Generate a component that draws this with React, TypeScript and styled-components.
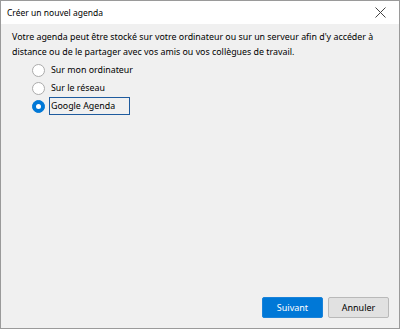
import React, { useState } from "react";
import styled, { createGlobalStyle } from "styled-components";

const GlobalStyle = createGlobalStyle`
  html, body {
    margin: 0;
    padding: 0;
    background: #f0f0f0;
  }
  body {
    font-family: "Segoe UI", "Noto Sans", "Liberation Sans", sans-serif;
  }
`;

const OPTIONS = ["Sur mon ordinateur", "Sur le réseau", "Google Agenda"];

const App = () => {
  const [selected, setSelected] = useState(2);

  return (
    <StyledWindow>
      <GlobalStyle />
      <TitleBar>
        <Title>Créer un nouvel agenda</Title>
        <CloseButton aria-label="Fermer">
          <svg width="11" height="11" viewBox="0 0 11 11">
            <path d="M0.5 0.5 L10.5 10.5 M10.5 0.5 L0.5 10.5" stroke="#444" strokeWidth="1" />
          </svg>
        </CloseButton>
      </TitleBar>

      <Body>
        <Intro>
          Votre agenda peut être stocké sur votre ordinateur ou sur un serveur afin d'y accéder à
          <br />
          distance ou de le partager avec vos amis ou vos collègues de travail.
        </Intro>

        <OptionList>
          {OPTIONS.map((label, i) => (
            <OptionRow key={label} onClick={() => setSelected(i)}>
              <Radio $checked={selected === i} />
              <OptionLabel $focused={selected === i}>{label}</OptionLabel>
            </OptionRow>
          ))}
        </OptionList>
      </Body>

      <Footer>
        <Button $primary>Suivant</Button>
        <Button>Annuler</Button>
      </Footer>
    </StyledWindow>
  );
};

export default App;

const StyledWindow = styled.div`
  display: flex;
  flex-direction: column;
  box-sizing: border-box;
  width: 400px;
  height: 329px;
  border: 1px solid #9a9a9a;
  background: #f0f0f0;
  color: #000;
  font-size: 8.85px;
`;

const TitleBar = styled.div`
  display: flex;
  align-items: center;
  justify-content: space-between;
  height: 23px;
  padding-left: 6px;
  background: #fff;
`;

const Title = styled.span`
  font-size: 8.5px;
  color: #000;
`;

const CloseButton = styled.div`
  display: flex;
  align-items: center;
  justify-content: center;
  width: 26px;
  height: 23px;
  margin-right: 6px;
`;

const Body = styled.div`
  display: flex;
  flex-direction: column;
  flex: 1;
  padding: 6px 11px 0 11px;
`;

const Intro = styled.p`
  margin: 0;
  line-height: 15px;
  white-space: nowrap;
`;

const OptionList = styled.div`
  display: flex;
  flex-direction: column;
  margin-top: 1px;
  padding-left: 20px;
`;

const OptionRow = styled.label`
  display: flex;
  align-items: center;
  gap: 4px;
  height: 18px;
`;

const Radio = styled.span<{ $checked?: boolean }>`
  position: relative;
  box-sizing: border-box;
  width: 13px;
  height: 13px;
  border-radius: 50%;
  background: ${(p) => (p.$checked ? "#0078d7" : "#fff")};
  border: 1px solid ${(p) => (p.$checked ? "#0078d7" : "#ababab")};

  &::after {
    content: "";
    display: ${(p) => (p.$checked ? "block" : "none")};
    position: absolute;
    left: 50%;
    top: 50%;
    width: 5px;
    height: 5px;
    margin: -2.5px 0 0 -2.5px;
    border-radius: 50%;
    background: #fff;
  }
`;

const OptionLabel = styled.span<{ $focused?: boolean }>`
  display: inline-block;
  box-sizing: border-box;
  height: 18px;
  padding: 0 ${(p) => (p.$focused ? "14px" : "1px")} 0 1px;
  line-height: 16px;
  border: 1px solid ${(p) => (p.$focused ? "#1e5b9e" : "transparent")};
`;

const Footer = styled.div`
  display: flex;
  justify-content: flex-end;
  gap: 5px;
  padding: 0 10px 10px 0;
`;

const Button = styled.button<{ $primary?: boolean }>`
  box-sizing: border-box;
  width: 61px;
  height: 21px;
  padding: 0;
  border-radius: 2px;
  font-family: inherit;
  font-size: 9px;
  border: 1px solid ${(p) => (p.$primary ? "#1a83da" : "#b9b9b9")};
  background: ${(p) => (p.$primary ? "#0078d7" : "#e1e1e1")};
  color: ${(p) => (p.$primary ? "#fff" : "#000")};
`;
